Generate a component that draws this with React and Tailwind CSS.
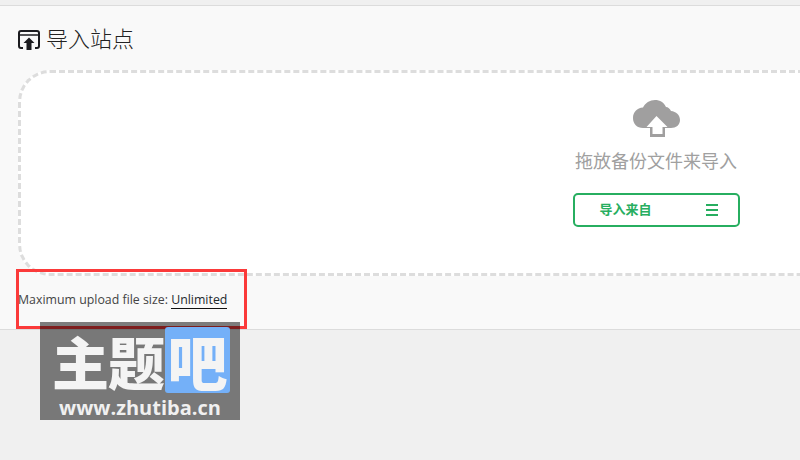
const cjk = 'font-["Liberation_Sans","Noto_Sans_CJK_SC",sans-serif]';

const ImportIcon = () => (
  <svg width="22" height="20" viewBox="0 0 22 20" fill="none">
    <path d="M5 18H3A2 2 0 0 1 1 16V3A2 2 0 0 1 3 1H19A2 2 0 0 1 21 3V16A2 2 0 0 1 19 18H17" stroke="#1b1b1f" strokeWidth="2" />
    <path d="M2 5H20" stroke="#1b1b1f" strokeWidth="1.500" />
    <path d="M11 7.500L16.500 13H13.500V20H8.500V13H5.500Z" fill="#1b1b1f" />
  </svg>
);

const CloudIcon = () => (
  <svg width="47" height="37" viewBox="0 0 47 37">
    <path d="M10 28C4 28 0 24 0 18C0 12 4 8 10 7.500C12 3 17 0 22 0C27 0 31 2.500 33 7C35 7 37 9 38 11C43 11.500 47 15 47 20C47 25 43 28 38 28Z" fill="#a09f9f" />
    <path d="M17 27H32V37H17Z" fill="#a09f9f" />
    <path d="M23.500 16L34.500 27H29.500V34H19.500V27H13.500Z" fill="#fff" />
  </svg>
);

export default function App() {
  return (
    <div className={`relative w-[800px] h-[460px] overflow-hidden bg-[#f0f0f0] ${cjk}`}>
      <div className="h-[5px]" />
      <div className="h-[325px] px-[18px] bg-[#f9f9f9] border-y border-[#dcdcdc]">
        <div className="h-[64px] flex items-center gap-[6px] pt-[4px]">
          <ImportIcon />
          <h2 className="text-[22px] leading-[28px] font-light text-[#222]">导入站点</h2>
        </div>
        <div className="w-[1276px] h-[206px] flex flex-col items-center pt-[27px] bg-white border-[3px] border-dashed border-[#dddddd] rounded-[32px]">
          <CloudIcon />
          <p className="mt-[12px] text-[18px] leading-[26px] text-[#a0a0a0]">拖放备份文件来导入</p>
          <button className="mt-[18px] w-[167px] h-[34px] pl-[25px] pr-[20px] flex items-center justify-between bg-white border-2 border-[#27ae60] rounded-[5px]">
            <span className="text-[13px] font-bold text-[#27ae60]">导入来自</span>
            <span className="w-[12px] flex flex-col gap-[3px]">
              <span className="h-[2px] bg-[#27ae60]" />
              <span className="h-[2px] bg-[#27ae60]" />
              <span className="h-[2px] bg-[#27ae60]" />
            </span>
          </button>
        </div>
        <p className="mt-[15px] text-[12.350px] leading-[18px] text-[#444] font-['Open_Sans',sans-serif]">
          Maximum upload file size: <span className="text-[#23282d] border-b border-[#111]">Unlimited</span>
        </p>
      </div>

      {/* annotation box */}
      <div className="absolute left-[16px] top-[269px] w-[231px] h-[60px] border-[3px] border-[#fb3a3a]" />

      {/* watermark */}
      <div className="absolute left-[40px] top-[322px] w-[200px] h-[98px] bg-[rgba(0,0,0,0.5)] flex flex-col items-center">
        <div className="flex items-center h-[66px] mt-[5px] pl-[2px]">
          <span className="text-[57px] leading-[60px] font-black tracking-[-1px] text-[#f4f4f4] font-['Noto_Sans_CJK_SC',sans-serif]">主题</span>
          <span className="w-[65px] h-[66px] ml-[1px] flex items-center justify-center rounded-[3px] bg-[#74b0f8] text-[60px] leading-[60px] font-black text-[#f4f4f4] font-['Noto_Sans_CJK_SC',sans-serif]">吧</span>
        </div>
        <span className="mt-[4px] text-[20px] leading-[22px] font-bold text-[#f0f0f0] font-['Open_Sans',sans-serif]">www.zhutiba.cn</span>
      </div>
    </div>
  );
}
